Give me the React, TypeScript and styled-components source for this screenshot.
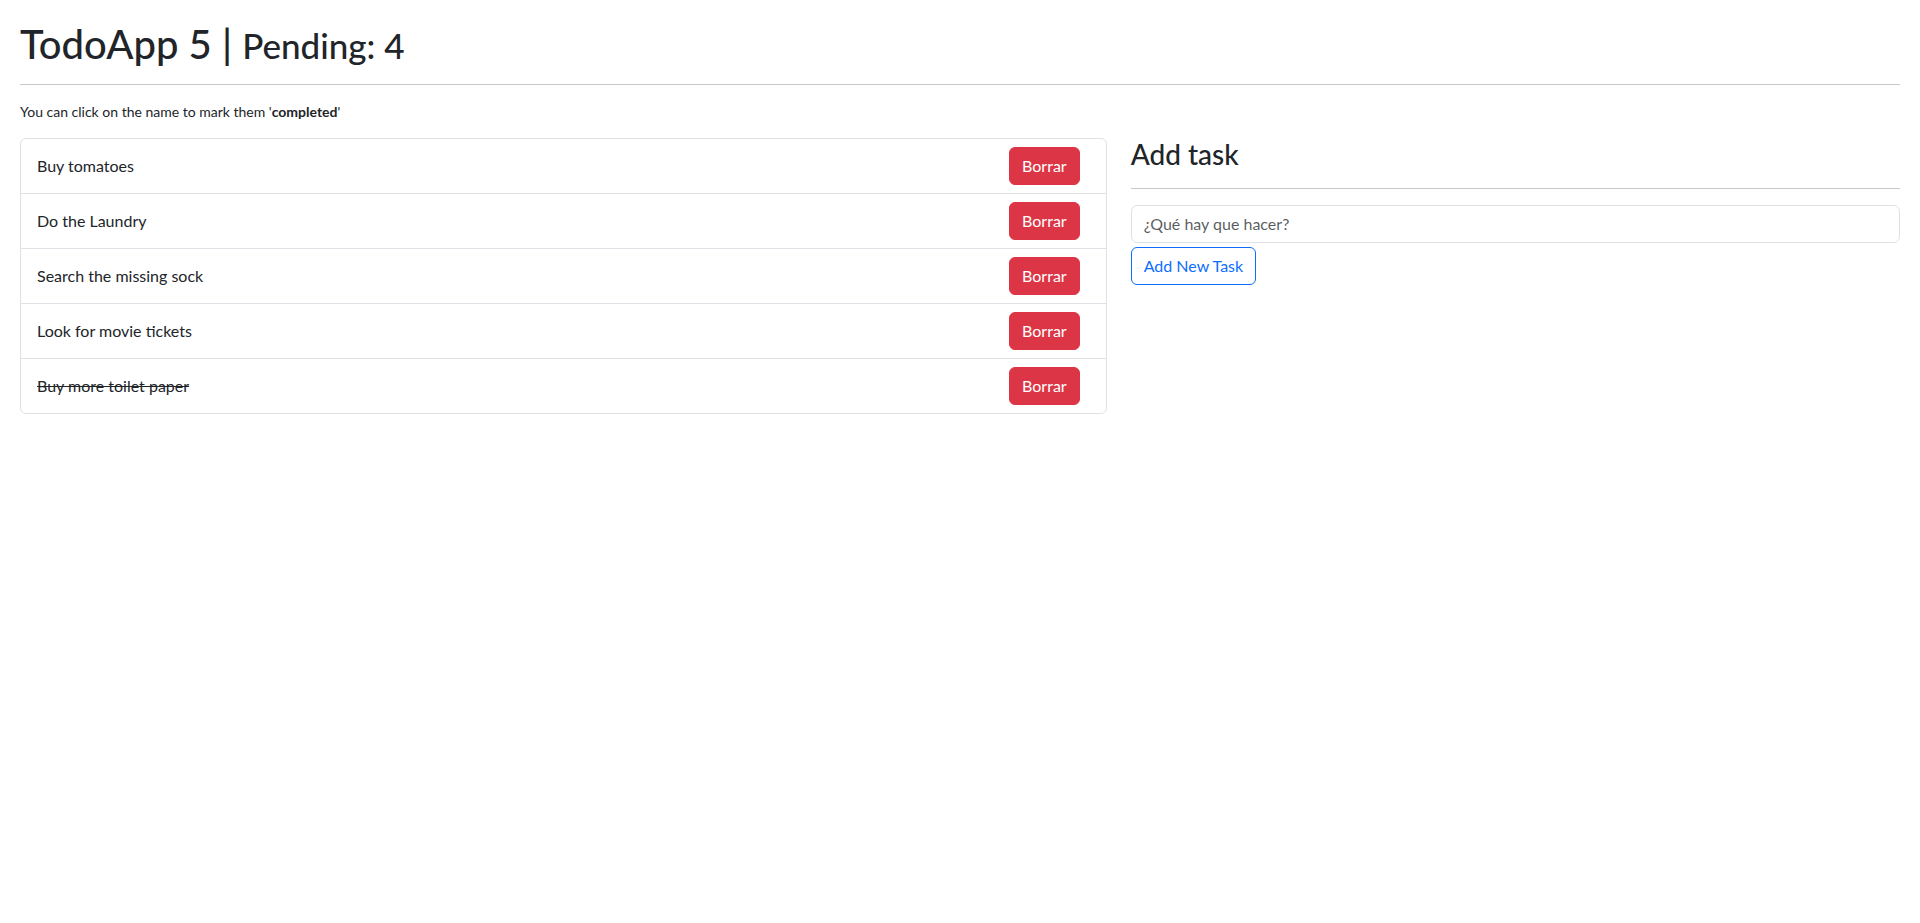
import React, { useState } from "react"
import styled, { createGlobalStyle } from "styled-components"

interface Todo {
  id: number
  desc: string
  done: boolean
}

const initialTodos: Todo[] = [
  { id: 1, desc: "Buy tomatoes", done: false },
  { id: 2, desc: "Do the Laundry", done: false },
  { id: 3, desc: "Search the missing sock", done: false },
  { id: 4, desc: "Look for movie tickets", done: false },
  { id: 5, desc: "Buy more toilet paper", done: true },
]

const GlobalStyle = createGlobalStyle`
  * {
    box-sizing: border-box;
  }
  body {
    margin: 8px;
    font-family: "Segoe UI", Lato, "Liberation Sans", sans-serif;
    font-size: 16px;
    line-height: 1.5;
    color: #212529;
    background: #fff;
  }
`

const Container = styled.div`
  padding: 12px 12px 0;
`

const Title = styled.h1`
  margin: 0 0 8px;
  font-size: 40px;
  font-weight: 500;
  line-height: 1.2;

  small {
    font-size: 0.875em;
  }
`

const Rule = styled.hr`
  margin: 16px 0;
  border: 0;
  border-top: 1px solid #c8c9ca;
`

const Hint = styled.p`
  margin: 0 0 16px;
  font-size: 14px;
`

const Row = styled.div`
  display: flex;
  margin: 0 -12px;
`

const Col = styled.div<{ $span: number }>`
  flex: 0 0 calc(100% * ${(p) => p.$span} / 12);
  padding: 0 12px;
`

const List = styled.ol`
  list-style: none;
  margin: 0;
  padding: 0;
  border: 1px solid #dee2e6;
  border-radius: 6px;
`

const Item = styled.li`
  display: flex;
  justify-content: space-between;
  align-items: center;
  padding: 8px 16px;
  border-top: 1px solid #dee2e6;

  &:first-child {
    border-top: 0;
  }
`

const ItemText = styled.span<{ $done: boolean }>`
  cursor: pointer;
  text-decoration: ${(p) => (p.$done ? "line-through" : "none")};
`

const Button = styled.button`
  font-family: inherit;
  font-size: 16px;
  line-height: 1.5;
  height: 38px;
  padding: 6px 12px;
  border-radius: 6px;
  cursor: pointer;
`

const DangerButton = styled(Button)`
  margin-right: 10px;
  color: #fff;
  background: #dc3545;
  border: 1px solid #dc3545;
`

const OutlineButton = styled(Button)`
  color: #0d6efd;
  background: transparent;
  border: 1px solid #0d6efd;
`

const SubTitle = styled.h3`
  margin: 0 0 8px;
  font-size: 28px;
  font-weight: 500;
  line-height: 1.2;
`

const Input = styled.input`
  display: block;
  width: 100%;
  height: 38px;
  margin-bottom: 4px;
  padding: 6px 12px;
  font-family: inherit;
  font-size: 16px;
  color: #212529;
  border: 1px solid #dee2e6;
  border-radius: 6px;
  outline: none;

  &::placeholder {
    color: rgba(33, 37, 41, 0.75);
  }
`

export default function App() {
  const [todos, setTodos] = useState<Todo[]>(initialTodos)
  const [desc, setDesc] = useState("")
  const pending = todos.filter((t) => !t.done).length

  const toggle = (id: number) =>
    setTodos(todos.map((t) => (t.id === id ? { ...t, done: !t.done } : t)))
  const remove = (id: number) => setTodos(todos.filter((t) => t.id !== id))
  const add = (e: React.FormEvent) => {
    e.preventDefault()
    if (desc.trim().length <= 1) return
    setTodos([...todos, { id: Date.now(), desc, done: false }])
    setDesc("")
  }

  return (
    <>
      <GlobalStyle />
      <Container>
        <Title>
          TodoApp {todos.length} | <small>Pending: {pending}</small>
        </Title>
        <Rule />
        <Hint>
          You can click on the name to mark them '<b>completed</b>'
        </Hint>
        <Row>
          <Col $span={7}>
            <List>
              {todos.map((t) => (
                <Item key={t.id}>
                  <ItemText $done={t.done} onClick={() => toggle(t.id)}>
                    {t.desc}
                  </ItemText>
                  <DangerButton onClick={() => remove(t.id)}>Borrar</DangerButton>
                </Item>
              ))}
            </List>
          </Col>
          <Col $span={5}>
            <SubTitle>Add task</SubTitle>
            <Rule />
            <form onSubmit={add}>
              <Input
                type="text"
                placeholder="¿Qué hay que hacer?"
                value={desc}
                onChange={(e) => setDesc(e.target.value)}
              />
              <OutlineButton type="submit">Add New Task</OutlineButton>
            </form>
          </Col>
        </Row>
      </Container>
    </>
  )
}
